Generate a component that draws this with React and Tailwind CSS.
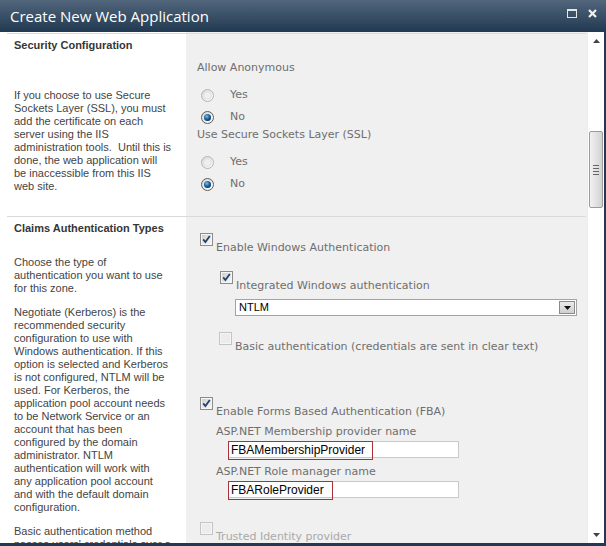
const L = "font-['Liberation_Sans',Arial,sans-serif]";
const R = "font-['DejaVu_Sans',Verdana,sans-serif]";

function Radio({ checked }) {
  return (
    <svg width="13" height="13" viewBox="0 0 13 13">
      <defs>
        <linearGradient id="rg" x1="0" y1="0" x2="1" y2="1">
          <stop offset="0" stopColor="#d8d8d8" />
          <stop offset="1" stopColor="#ffffff" />
        </linearGradient>
        <radialGradient id="rd" cx="0.4" cy="0.35" r="0.7">
          <stop offset="0" stopColor="#7fc0ee" />
          <stop offset="0.5" stopColor="#1f6aa8" />
          <stop offset="1" stopColor="#0b2f52" />
        </radialGradient>
      </defs>
      <circle cx="6.5" cy="6.5" r="6" fill="url(#rg)" stroke={checked ? "#5c5c5c" : "#b4b4b4"} />
      {checked ? (
        <circle cx="6.5" cy="6.5" r="3.5" fill="url(#rd)" />
      ) : (
        <circle cx="6.5" cy="6.5" r="3.8" fill="#efefef" stroke="#dcdcdc" strokeWidth="0.8" />
      )}
    </svg>
  );
}

function Check({ checked, disabled }) {
  return (
    <svg width="13" height="13" viewBox="0 0 13 13" className="shrink-0">
      <defs>
        <linearGradient id="cg" x1="0" y1="0" x2="1" y2="1">
          <stop offset="0" stopColor="#cfcfcf" />
          <stop offset="1" stopColor="#f8f8f8" />
        </linearGradient>
      </defs>
      <rect x="0.5" y="0.5" width="12" height="12" fill="#f6f6f6" stroke={disabled ? "#c4c4c4" : "#8c8c8c"} />
      <rect x="2" y="2" width="9" height="9" fill={disabled ? "#ececec" : "url(#cg)"} />
      {checked && (
        <path d="M3.2 6.4 L5.4 9 L9.8 3" fill="none" stroke="#23416a" strokeWidth="1.8" />
      )}
    </svg>
  );
}

function RadioRow({ label, checked, className = "" }) {
  return (
    <div className={`flex items-center h-[22px] ${className}`}>
      <div className="ml-[4px]">
        <Radio checked={checked} />
      </div>
      <span className="ml-[16px] leading-[14px]">{label}</span>
    </div>
  );
}

function CheckRow({ label, checked, disabled, faded, className = "" }) {
  return (
    <div className={`flex items-start ${className}`}>
      <Check checked={checked} disabled={disabled} />
      <span className={`ml-[3px] mt-[8px] leading-[14px] ${faded ? "text-[#a9a9a9]" : ""}`}>{label}</span>
    </div>
  );
}

function Separator({ top }) {
  return (
    <div className="flex shrink-0">
      <div className={`w-[186px] bg-white pl-[7px] ${top ? "pt-px" : ""}`}>
        <div className="h-px bg-[#dadada]" />
      </div>
      <div className={`flex-1 bg-[#f0f0f0] ${top ? "pt-px" : ""}`}>
        <div className="h-px bg-[#dadada] mr-px" />
      </div>
    </div>
  );
}

function Lines({ lines }) {
  return (
    <div>
      {lines.map((t, i) => (
        <div key={i} className="h-[13px] leading-[13px] whitespace-pre">
          {t}
        </div>
      ))}
    </div>
  );
}

function TextBox({ value, redWidth }) {
  return (
    <div className="flex w-[231px] h-[17px] bg-white border border-[#c9c9c9]">
      <div
        className={`-ml-px -mt-px h-[19px] border border-[#a8323a] ${L} text-[12px] text-black leading-[17px] pl-[2px]`}
        style={{ width: redWidth }}
      >
        {value}
      </div>
    </div>
  );
}

export default function App() {
  return (
    <div className="w-[606px] h-[546px] flex flex-col bg-[#1f3a55] overflow-hidden">
      {/* title bar */}
      <div className="h-[32px] shrink-0 flex items-center justify-between pl-[10px] pr-[9px] bg-gradient-to-b from-[#52667c] to-[#213a51]">
        <span className="font-['Open_Sans',sans-serif] text-[15px] text-white leading-none">
          Create New Web Application
        </span>
        <div className="flex items-center gap-[11px] -mt-[6px]">
          <div className="w-[10px] h-[9px] border border-[#e6e6e6] border-t-2" />
          <svg width="9" height="9" viewBox="0 0 9 9">
            <path d="M1 1 L8 8 M8 1 L1 8" stroke="#f0f0f0" strokeWidth="2.2" />
          </svg>
        </div>
      </div>

      <div className="flex h-[511px] shrink-0 mr-[2px]">
        <div className="flex-1 flex flex-col overflow-hidden">
          <Separator top />

          {/* Security Configuration */}
          <div className="flex h-[182px] shrink-0">
            <div className={`w-[186px] bg-white pl-[14px] pt-[5px] ${L} text-[11px] text-[#444]`}>
              <div className="h-[13px] leading-[13px] font-bold text-[#363636]">Security Configuration</div>
              <div className="mt-[37px]">
                <Lines
                  lines={[
                    "If you choose to use Secure",
                    "Sockets Layer (SSL), you must",
                    "add the certificate on each",
                    "server using the IIS",
                    "administration tools.  Until this is",
                    "done, the web application will",
                    "be inaccessible from this IIS",
                    "web site.",
                  ]}
                />
              </div>
            </div>
            <div className={`flex-1 bg-[#f0f0f0] pl-[11px] pt-[27px] ${R} text-[11px] text-[#6e6e6e]`}>
              <div className="h-[14px] leading-[14px]">Allow Anonymous</div>
              <RadioRow label="Yes" className="mt-[9px]" />
              <RadioRow label="No" checked />
              <div className="h-[14px] leading-[14px]">Use Secure Sockets Layer (SSL)</div>
              <RadioRow label="Yes" className="mt-[9px]" />
              <RadioRow label="No" checked />
            </div>
          </div>

          <Separator />

          {/* Claims Authentication Types */}
          <div className="flex flex-1">
            <div className={`w-[186px] bg-white pl-[14px] pt-[5px] ${L} text-[11px] text-[#444]`}>
              <div className="h-[13px] leading-[13px] font-bold text-[#363636]">Claims Authentication Types</div>
              <div className="mt-[21px]">
                <Lines lines={["Choose the type of", "authentication you want to use", "for this zone."]} />
              </div>
              <div className="mt-[11px]">
                <Lines
                  lines={[
                    "Negotiate (Kerberos) is the",
                    "recommended security",
                    "configuration to use with",
                    "Windows authentication. If this",
                    "option is selected and Kerberos",
                    "is not configured, NTLM will be",
                    "used. For Kerberos, the",
                    "application pool account needs",
                    "to be Network Service or an",
                    "account that has been",
                    "configured by the domain",
                    "administrator. NTLM",
                    "authentication will work with",
                    "any application pool account",
                    "and with the default domain",
                    "configuration.",
                  ]}
                />
              </div>
              <div className="mt-[11px]">
                <Lines lines={["Basic authentication method", "passes users' credentials over a"]} />
              </div>
            </div>
            <div className={`flex-1 bg-[#f0f0f0] pl-[11px] pt-[16px] ${R} text-[11px] text-[#6e6e6e]`}>
              <CheckRow label="Enable Windows Authentication" checked className="ml-[3px]" />
              <CheckRow label="Integrated Windows authentication" checked className="ml-[23px] mt-[16px]" />
              <div className="ml-[38px] mt-[6px] w-[342px] h-[17px] flex items-center bg-white border border-[#a3a3a3]">
                <span className={`flex-1 pl-[3px] ${L} text-[11px] text-black leading-none`}>NTLM</span>
                <div className="w-[16px] h-[13px] mr-px flex items-center justify-center bg-gradient-to-b from-[#ebebeb] to-[#cfcfcf] border border-[#8a8a8a]">
                  <svg width="7" height="4" viewBox="0 0 7 4">
                    <path d="M0 0 H7 L3.5 4 Z" fill="#111" />
                  </svg>
                </div>
              </div>
              <CheckRow
                label="Basic authentication (credentials are sent in clear text)"
                disabled
                className="ml-[22px] mt-[16px]"
              />
              <CheckRow label="Enable Forms Based Authentication (FBA)" checked className="ml-[3px] mt-[43px]" />
              <div className="ml-[19px] mt-[6px] h-[14px] leading-[14px]">ASP.NET Membership provider name</div>
              <div className="ml-[31px] mt-[2px]">
                <TextBox value="FBAMembershipProvider" redWidth="145px" />
              </div>
              <div className="ml-[19px] mt-[7px] h-[14px] leading-[14px]">ASP.NET Role manager name</div>
              <div className="ml-[31px] mt-[2px]">
                <TextBox value="FBARoleProvider" redWidth="105px" />
              </div>
              <CheckRow label="Trusted Identity provider" disabled faded className="ml-[3px] mt-[24px]" />
            </div>
          </div>
        </div>

        {/* scrollbar */}
        <div className="w-[17px] shrink-0 bg-white flex flex-col border-l border-[#ececec]">
          <div className="h-[17px] flex items-center justify-center">
            <svg width="7" height="4" viewBox="0 0 7 4">
              <path d="M0 4 H7 L3.5 0 Z" fill="#444" />
            </svg>
          </div>
          <div className="mt-[82px] mx-px h-[77px] rounded-[2px] border border-[#9b9b9b] bg-gradient-to-r from-[#f2f2f2] to-[#d2d2d2] flex items-center justify-center">
            <div className="flex flex-col gap-[2px]">
              <div className="w-[6px] h-px bg-[#666]" />
              <div className="w-[6px] h-px bg-[#666]" />
              <div className="w-[6px] h-px bg-[#666]" />
              <div className="w-[6px] h-px bg-[#666]" />
            </div>
          </div>
          <div className="flex-1" />
          <div className="h-[17px] flex items-center justify-center">
            <svg width="7" height="4" viewBox="0 0 7 4">
              <path d="M0 0 H7 L3.5 4 Z" fill="#444" />
            </svg>
          </div>
        </div>
      </div>
    </div>
  );
}
